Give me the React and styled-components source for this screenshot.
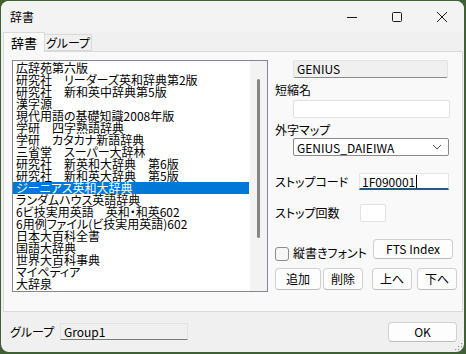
import React from 'react';
import styled, { createGlobalStyle } from 'styled-components';

const GlobalStyle = createGlobalStyle`
    html, body {
        margin: 0;
        padding: 0;
        background: #3f5f34;
        width: 466px;
        height: 354px;
        overflow: hidden;
    }
    * {
        box-sizing: border-box;
    }
`;

const dictionaries = [
    '広辞苑第六版',
    '研究社　リーダーズ英和辞典第2版',
    '研究社　新和英中辞典第5版',
    '漢字源',
    '現代用語の基礎知識2008年版',
    '学研　四字熟語辞典',
    '学研　カタカナ新語辞典',
    '三省堂　スーパー大辞林',
    '研究社　新英和大辞典　第6版',
    '研究社　新和英大辞典　第5版',
    'ジーニアス英和大辞典',
    'ランダムハウス英語辞典',
    '6ビ技実用英語　英和・和英602',
    '6用例ファイル(ビ技実用英語)602',
    '日本大百科全書',
    '国語大辞典',
    '世界大百科事典',
    'マイペディア',
    '大辞泉',
];

const Window = styled.div`
    margin: 1px 0 0 1px;
    width: 463px;
    height: 351px;
    background: #f0f0f0;
    border-radius: 8px;
    overflow: hidden;
    display: flex;
    flex-direction: column;
    font-family: "Noto Sans CJK JP", sans-serif;
    font-size: 12px;
    font-feature-settings: "palt" 1;
    white-space: nowrap;
    color: #000;
    position: relative;
`;

const TitleBar = styled.div`
    height: 31px;
    flex: 0 0 31px;
    background: #f3f3f3;
    display: flex;
    align-items: center;
    padding-left: 9px;
`;

const Title = styled.div`
    flex: 1;
    font-size: 12px;
    line-height: 16px;
    margin-top: 1px;
`;

const Control = styled.div`
    width: 45px;
    height: 31px;
    display: flex;
    align-items: center;
    justify-content: center;
`;

const Content = styled.div`
    padding: 0 1px 0 2px;
    display: flex;
    flex-direction: column;
`;

const Tabs = styled.div`
    height: 19px;
    display: flex;
    align-items: flex-end;
    position: relative;
    z-index: 1;
`;

const Tab = styled.div`
    height: ${({ $active }) => ($active ? '20px' : '17px')};
    margin-bottom: ${({ $active }) => ($active ? '-1px' : '0')};
    width: ${({ $w }) => $w}px;
    background: ${({ $active }) => ($active ? '#f9f9f9' : '#f0f0f0')};
    border: 1px solid #d9d9d9;
    border-bottom: ${({ $active }) => ($active ? 'none' : '1px solid #d9d9d9')};
    border-left: ${({ $active }) => ($active ? '1px solid #d9d9d9' : 'none')};
    display: flex;
    align-items: center;
    justify-content: center;
    font-size: ${({ $active }) => ($active ? '13px' : '12px')};
    line-height: 16px;
`;

const Panel = styled.div`
    height: 261px;
    background: #f9f9f9;
    border: 1px solid #d9d9d9;
    padding: 8px 0 0 8px;
    display: flex;
    align-items: flex-start;
`;

const ListBox = styled.div`
    width: 256px;
    height: 232px;
    border: 1px solid #828790;
    background: #fff;
    display: flex;
`;

const Items = styled.div`
    flex: 1;
    padding-top: 1px;
    overflow: hidden;
`;

const Item = styled.div`
    height: 12px;
    line-height: 12px;
    font-size: 12px;
    padding-left: 3px;
    margin-right: 1px;
    white-space: pre;
    background: ${({ $selected }) => ($selected ? '#0078d7' : 'transparent')};
    color: ${({ $selected }) => ($selected ? '#fff' : '#000')};
`;

const ScrollTrack = styled.div`
    width: 17px;
    background: #f3f3f3;
    display: flex;
    justify-content: center;
    padding-top: 18px;
`;

const Thumb = styled.div`
    width: 3px;
    height: 159px;
    border-radius: 2px;
    background: #868686;
`;

const Side = styled.div`
    margin-left: 7px;
    width: 183px;
    display: flex;
    flex-direction: column;
`;

const Label = styled.div`
    line-height: 16px;
    height: 16px;
    margin-top: ${({ $mt }) => $mt || 0}px;
`;

const Field = styled.div`
    height: ${({ $h }) => $h || 18}px;
    width: ${({ $w }) => $w}px;
    margin-left: ${({ $ml }) => ($ml === undefined ? 18 : $ml)}px;
    margin-top: ${({ $mt }) => $mt || 0}px;
    background: ${({ $ro }) => ($ro ? '#f0f0f0' : '#fff')};
    border: 1px solid ${({ $ro }) => ($ro ? '#e3e3e3' : '#e1e1e1')};
    border-bottom-color: ${({ $ro }) => ($ro ? '#8a8a8a' : '#e1e1e1')};
    border-radius: 2px;
    display: flex;
    align-items: center;
    padding-left: 3px;
    line-height: 16px;
`;

const Select = styled.div`
    height: 18px;
    width: 156px;
    margin-left: 18px;
    background: #fff;
    border: 1px solid #8a8a8a;
    border-radius: 2px;
    display: flex;
    align-items: center;
    justify-content: space-between;
    padding: 0 6px 0 3px;
`;

const FocusField = styled.div`
    height: 17px;
    width: 90px;
    background: #fff;
    border: 1px solid #e6e6e6;
    border-bottom: 2px solid #1d5e80;
    display: flex;
    align-items: center;
    padding-left: 2px;
`;

const Caret = styled.span`
    display: inline-block;
    width: 1px;
    height: 13px;
    background: #000;
    margin-left: 1px;
`;

const Row = styled.div`
    display: flex;
    align-items: ${({ $align }) => $align || 'center'};
    margin-top: ${({ $mt }) => $mt || 0}px;
    height: ${({ $h }) => $h}px;
`;

const RowLabel = styled.div`
    width: ${({ $w }) => $w}px;
    line-height: 16px;
`;

const Check = styled.div`
    width: 14px;
    height: 14px;
    border: 1px solid #8c8c8c;
    border-radius: 3px;
    background: #f6f6f6;
`;

const CheckLabel = styled.div`
    margin-left: 4px;
    width: 80px;
    line-height: 16px;
`;

const Button = styled.div`
    height: ${({ $h }) => $h || 22}px;
    width: ${({ $w }) => $w}px;
    margin-left: ${({ $ml }) => $ml || 0}px;
    align-self: ${({ $top }) => ($top ? 'flex-start' : 'auto')};
    background: #fdfdfd;
    border: 1px solid #d0d0d0;
    border-bottom-color: #bcbcbc;
    border-radius: 4px;
    display: flex;
    align-items: center;
    justify-content: center;
    line-height: 16px;
`;

const Bottom = styled.div`
    height: 40px;
    display: flex;
    align-items: center;
    padding: 0 7px 0 9px;
`;

const GroupLabel = styled.div`
    width: 50px;
    line-height: 16px;
    margin-top: -1px;
`;

const GroupField = styled.div`
    width: 128px;
    height: 17px;
    background: #f0f0f0;
    border: 1px solid #e3e3e3;
    border-bottom-color: #7a7a7a;
    display: flex;
    align-items: center;
    padding-left: 3px;
    margin-top: -1px;
`;

const Spacer = styled.div`
    flex: 1;
`;

const Grip = styled.svg`
    position: absolute;
    right: 1px;
    bottom: 1px;
`;

const Minimize = () => (
    <svg width="12" height="12" viewBox="0 0 12 12">
        <path d="M1 6.5h10" stroke="#1a1a1a" strokeWidth="1" />
    </svg>
);

const Maximize = () => (
    <svg width="12" height="12" viewBox="0 0 12 12">
        <rect x="1.5" y="1.5" width="9" height="9" rx="1" fill="none" stroke="#1a1a1a" strokeWidth="1" />
    </svg>
);

const Close = () => (
    <svg width="12" height="12" viewBox="0 0 12 12">
        <path d="M1 1l10 10M11 1L1 11" stroke="#1a1a1a" strokeWidth="1" />
    </svg>
);

const Chevron = () => (
    <svg width="10" height="6" viewBox="0 0 10 6">
        <path d="M1 1l4 4 4-4" fill="none" stroke="#555" strokeWidth="1" />
    </svg>
);

const App = () => (
    <>
        <GlobalStyle />
        <Window>
            <TitleBar>
                <Title>辞書</Title>
                <Control><Minimize /></Control>
                <Control><Maximize /></Control>
                <Control><Close /></Control>
            </TitleBar>
            <Content>
                <Tabs>
                    <Tab $active $w={42}>辞書</Tab>
                    <Tab $w={47}>グループ</Tab>
                </Tabs>
                <Panel>
                    <ListBox>
                        <Items>
                            {dictionaries.map((name, i) => (
                                <Item key={name} $selected={i === 10}>{name}</Item>
                            ))}
                        </Items>
                        <ScrollTrack>
                            <Thumb />
                        </ScrollTrack>
                    </ListBox>
                    <Side>
                        <Field $ro $w={155}>GENIUS</Field>
                        <Label $mt={4}>短縮名</Label>
                        <Field $w={157} $mt={2} />
                        <Label $mt={4}>外字マップ</Label>
                        <Select>
                            <span>GENIUS_DAIEIWA</span>
                            <Chevron />
                        </Select>
                        <Row $mt={17} $h={17}>
                            <RowLabel $w={84}>ストップコード</RowLabel>
                            <FocusField>1F090001<Caret /></FocusField>
                        </Row>
                        <Row $mt={14} $h={18}>
                            <RowLabel $w={85}>ストップ回数</RowLabel>
                            <Field $w={26} $h={18} $ml={0} />
                        </Row>
                        <Row $mt={17} $h={22} $align="flex-end">
                            <Check />
                            <CheckLabel>縦書きフォント</CheckLabel>
                            <Button $w={80} $h={20} $top>FTS Index</Button>
                        </Row>
                        <Row $mt={7} $h={22}>
                            <Button $w={46}>追加</Button>
                            <Button $w={40} $ml={2}>削除</Button>
                            <Button $w={40} $ml={9}>上へ</Button>
                            <Button $w={40} $ml={5}>下へ</Button>
                        </Row>
                    </Side>
                </Panel>
            </Content>
            <Bottom>
                <GroupLabel>グループ</GroupLabel>
                <GroupField>Group1</GroupField>
                <Spacer />
                <Button $w={69} $h={20}>OK</Button>
            </Bottom>
            <Grip width="8" height="8" viewBox="0 0 8 8">
                <rect x="6" y="0" width="1.2" height="1.2" fill="#999" />
                <rect x="3" y="3" width="1.2" height="1.2" fill="#999" />
                <rect x="6" y="3" width="1.2" height="1.2" fill="#999" />
                <rect x="0" y="6" width="1.2" height="1.2" fill="#999" />
                <rect x="3" y="6" width="1.2" height="1.2" fill="#999" />
                <rect x="6" y="6" width="1.2" height="1.2" fill="#999" />
            </Grip>
        </Window>
    </>
);

export default App;
